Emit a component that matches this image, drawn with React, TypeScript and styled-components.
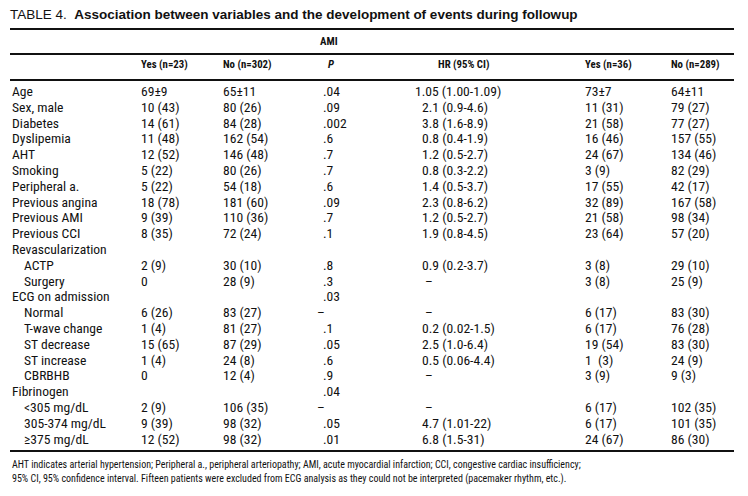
import React from "react";
import styled, { createGlobalStyle } from "styled-components";

const GlobalStyle = createGlobalStyle`
  html, body {
    margin: 0;
    padding: 0;
    background: #fff;
  }
  body {
    font-family: "Liberation Sans", Arial, sans-serif;
    color: #111;
  }
`;

const NARROW = `"Roboto Condensed", "Noto Sans Condensed", "Noto Sans", sans-serif`;
const COLS = "131px 82px 100px 99px 163px 86px 1fr";

type DataRow = {
  label: string;
  sub?: boolean;
  cells?: string[];
  p?: string;
  hrShift?: number;
};

const rows: DataRow[] = [
  { label: "Age", cells: ["69±9", "65±11", ".04", "1.05 (1.00-1.09)", "73±7", "64±11"], hrShift: -7 },
  { label: "Sex, male", cells: ["10 (43)", "80 (26)", ".09", "2.1 (0.9-4.6)", "11 (31)", "79 (27)"] },
  { label: "Diabetes", cells: ["14 (61)", "84 (28)", ".002", "3.8 (1.6-8.9)", "21 (58)", "77 (27)"] },
  { label: "Dyslipemia", cells: ["11 (48)", "162 (54)", ".6", "0.8 (0.4-1.9)", "16 (46)", "157 (55)"] },
  { label: "AHT", cells: ["12 (52)", "146 (48)", ".7", "1.2 (0.5-2.7)", "24 (67)", "134 (46)"] },
  { label: "Smoking", cells: ["5 (22)", "80 (26)", ".7", "0.8 (0.3-2.2)", "3 (9)", "82 (29)"] },
  { label: "Peripheral a.", cells: ["5 (22)", "54 (18)", ".6", "1.4 (0.5-3.7)", "17 (55)", "42 (17)"] },
  { label: "Previous angina", cells: ["18 (78)", "181 (60)", ".09", "2.3 (0.8-6.2)", "32 (89)", "167 (58)"] },
  { label: "Previous AMI", cells: ["9 (39)", "110 (36)", ".7", "1.2 (0.5-2.7)", "21 (58)", "98 (34)"] },
  { label: "Previous CCI", cells: ["8 (35)", "72 (24)", ".1", "1.9 (0.8-4.5)", "23 (64)", "57 (20)"] },
  { label: "Revascularization" },
  { label: "ACTP", sub: true, cells: ["2 (9)", "30 (10)", ".8", "0.9 (0.2-3.7)", "3 (8)", "29 (10)"] },
  { label: "Surgery", sub: true, cells: ["0", "28 (9)", ".3", "–", "3 (8)", "25 (9)"] },
  { label: "ECG on admission", p: ".03" },
  { label: "Normal", sub: true, cells: ["6 (26)", "83 (27)", "–", "–", "6 (17)", "83 (30)"] },
  { label: "T-wave change", sub: true, cells: ["1 (4)", "81 (27)", ".1", "0.2 (0.02-1.5)", "6 (17)", "76 (28)"] },
  { label: "ST decrease", sub: true, cells: ["15 (65)", "87 (29)", ".05", "2.5 (1.0-6.4)", "19 (54)", "83 (30)"] },
  { label: "ST increase", sub: true, cells: ["1 (4)", "24 (8)", ".6", "0.5 (0.06-4.4)", "1  (3)", "24 (9)"] },
  { label: "CBRBHB", sub: true, cells: ["0", "12 (4)", ".9", "–", "3 (9)", "9 (3)"] },
  { label: "Fibrinogen", p: ".04" },
  { label: "<305 mg/dL", sub: true, cells: ["2 (9)", "106 (35)", "–", "–", "6 (17)", "102 (35)"] },
  { label: "305-374 mg/dL", sub: true, cells: ["9 (39)", "98 (32)", ".05", "4.7 (1.01-22)", "6 (17)", "101 (35)"] },
  { label: "≥375 mg/dL", sub: true, cells: ["12 (52)", "98 (32)", ".01", "6.8 (1.5-31)", "24 (67)", "86 (30)"] },
];

function App() {
  return (
    <>
      <GlobalStyle />
      <Style.Page>
        <Style.Title>
          TABLE 4.&nbsp; <b>Association between variables and the development of events during followup</b>
        </Style.Title>
        <Style.Table>
          <Style.GroupRow height={23}>
            <Style.HeadCell col={4} shift={-3}>AMI</Style.HeadCell>
          </Style.GroupRow>
          <Style.HeaderRow>
            <Style.HeadCell col={2}>Yes (n=23)</Style.HeadCell>
            <Style.HeadCell col={3}>No (n=302)</Style.HeadCell>
            <Style.HeadCell col={4} shift={5}>
              <i>P</i>
            </Style.HeadCell>
            <Style.HeadCell col={5} shift={16}>HR (95% CI)</Style.HeadCell>
            <Style.HeadCell col={6}>Yes (n=36)</Style.HeadCell>
            <Style.HeadCell col={7}>No (n=289)</Style.HeadCell>
          </Style.HeaderRow>
          <Style.Body>
            {rows.map((r) => (
              <Style.Row key={r.label}>
                <Style.Label sub={!!r.sub}>{r.label}</Style.Label>
                {r.cells ? (
                  r.cells.map((c, i) => (
                    <Style.Cell key={i} shift={i === 3 ? (c === "–" ? 3 : r.hrShift ?? 0) : i === 2 && c === "–" ? -6 : 0}>
                      {c}
                    </Style.Cell>
                  ))
                ) : r.p ? (
                  <Style.Cell col={4} shift={0}>{r.p}</Style.Cell>
                ) : null}
              </Style.Row>
            ))}
          </Style.Body>
        </Style.Table>
        <Style.Footnote>
          AHT indicates arterial hypertension; Peripheral a., peripheral arteriopathy; AMI, acute myocardial infarction; CCI, congestive cardiac insufficiency;
          <br />
          95% CI, 95% confidence interval. Fifteen patients were excluded from ECG analysis as they could not be interpreted (pacemaker rhythm, etc.).
        </Style.Footnote>
      </Style.Page>
    </>
  );
}

export default App;

const Style = {
  Page: styled.div`
    width: 724px;
    padding: 7px 14px 0 10px;
  `,
  Title: styled.div`
    font-size: 13.5px;
    line-height: 16px;
    height: 16px;
    margin-bottom: 5px;
    white-space: nowrap;
    b {
      font-weight: bold;
    }
  `,
  Table: styled.div`
    border-top: 2px solid #111;
    border-bottom: 2px solid #111;
  `,
  GroupRow: styled.div<{ height: number }>`
    display: grid;
    grid-template-columns: ${COLS};
    align-items: center;
    height: ${(p) => p.height}px;
  `,
  HeaderRow: styled.div`
    display: grid;
    grid-template-columns: ${COLS};
    align-items: start;
    box-sizing: border-box;
    height: 28px;
    padding-top: 4px;
    border-top: 2px solid #111;
    border-bottom: 2px solid #111;
  `,
  HeadCell: styled.div<{ col: number; shift?: number }>`
    grid-column: ${(p) => p.col};
    font-family: ${NARROW};
    font-stretch: 75%;
    font-weight: bold;
    font-size: 10.8px;
    line-height: 12px;
    white-space: nowrap;
    margin-left: ${(p) => p.shift ?? 0}px;
  `,
  Body: styled.div`
    padding: 3px 0 3px;
  `,
  Row: styled.div`
    display: grid;
    grid-template-columns: ${COLS};
    height: 15.8px;
    font-family: ${NARROW};
    font-stretch: 75%;
    font-size: 13.6px;
    line-height: 15.8px;
  `,
  Label: styled.div<{ sub: boolean }>`
    grid-column: 1;
    padding-left: ${(p) => (p.sub ? 14 : 2)}px;
    white-space: nowrap;
  `,
  Cell: styled.div<{ col?: number; shift: number }>`
    ${(p) => (p.col ? `grid-column: ${p.col};` : "")}
    white-space: pre;
    margin-left: ${(p) => p.shift}px;
  `,
  Footnote: styled.div`
    margin-top: 6px;
    padding-left: 2px;
    font-family: ${NARROW};
    font-stretch: 75%;
    font-size: 10px;
    line-height: 14px;
    white-space: nowrap;
  `,
};
